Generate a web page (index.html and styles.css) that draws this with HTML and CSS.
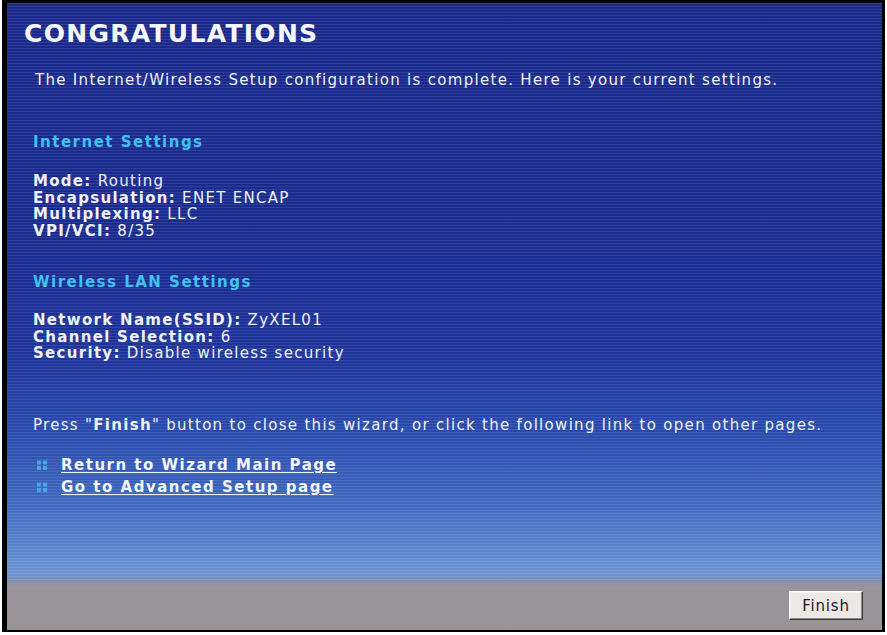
FILE: index.html
```html
<!DOCTYPE html>
<html>
<head>
<meta charset="utf-8">
<link rel="stylesheet" href="styles.css">
</head>
<body>
<div class="frame">
  <div class="main">
    <h1 class="title">CONGRATULATIONS</h1>
    <div class="content">
      <p class="intro">The Internet/Wireless Setup configuration is complete. Here is your current settings.</p>
      <h2 class="section first">Internet Settings</h2>
      <div class="list list-internet">
        <div><b>Mode:</b> Routing</div>
        <div><b>Encapsulation:</b> ENET ENCAP</div>
        <div><b>Multiplexing:</b> LLC</div>
        <div><b>VPI/VCI:</b> 8/35</div>
      </div>
      <h2 class="section second">Wireless LAN Settings</h2>
      <div class="list list-wlan">
        <div><b>Network Name(SSID):</b> ZyXEL01</div>
        <div><b>Channel Selection:</b> 6</div>
        <div><b>Security:</b> Disable wireless security</div>
      </div>
      <p class="press">Press "<b>Finish</b>" button to close this wizard, or click the following link to open other pages.</p>
      <div class="links">
        <a class="link" href="#"><svg class="dots" width="10" height="10" viewBox="0 0 10 10"><rect x="0" y="0.5" width="4" height="4"/><rect x="6" y="0.5" width="4" height="4"/><rect x="0" y="6" width="4" height="4"/><rect x="6" y="6" width="4" height="4"/></svg><span>Return to Wizard Main Page</span></a>
        <a class="link" href="#"><svg class="dots" width="10" height="10" viewBox="0 0 10 10"><rect x="0" y="0.5" width="4" height="4"/><rect x="6" y="0.5" width="4" height="4"/><rect x="0" y="6" width="4" height="4"/><rect x="6" y="6" width="4" height="4"/></svg><span>Go to Advanced Setup page</span></a>
      </div>
    </div>
  </div>
  <div class="footer">
    <button class="finish" type="button">Finish</button>
  </div>
</div>
</body>
</html>
```
FILE: styles.css
```css
html, body {
  margin: 0;
  padding: 0;
  background: #ffffff;
}
body {
  font-family: "DejaVu Sans", Verdana, sans-serif;
  font-size: 15px;
  letter-spacing: 1.3px;
  color: #eef1f8;
}
.frame {
  box-sizing: border-box;
  margin-left: 2px;
  width: 883px;
  height: 632px;
  border-style: solid;
  border-color: #000;
  border-width: 3px 3px 2px 5px;
  display: flex;
  flex-direction: column;
}
.main {
  height: 578px;
  box-sizing: border-box;
  padding-top: 16px;
  background:
    repeating-linear-gradient(to bottom, rgba(255,255,255,0.10) 0 1px, rgba(255,255,255,0) 1px 3px),
    linear-gradient(to bottom, #19288a 0%, #1a2b90 45%, #1e359c 62%, #2a4cae 75%, #3e67bf 86%, #5884cc 94%, #6b93d6 98.5%, #7b8cb0 100%);
}
.title {
  margin: 0 0 0 17px;
  font-size: 25px;
  line-height: 30px;
  font-weight: bold;
  color: #f4f6fb;
  letter-spacing: 1.3px;
}
.content {
  padding-left: 26px;
}
.intro {
  margin: 23px 0 0 2px;
  line-height: 16.6px;
}
.section {
  margin: 0;
  font-size: 15px;
  line-height: 16.6px;
  font-weight: bold;
  color: #3fc2ee;
  letter-spacing: 1.5px;
}
.section.first { margin-top: 45px; }
.section.second { margin-top: 34px; }
.list {
  line-height: 16.6px;
}
.list-internet { margin-top: 23px; }
.list-wlan { margin-top: 22px; }
.press {
  margin: 55px 0 0 0;
  line-height: 16.6px;
}
.links {
  margin-top: 21px;
  display: flex;
  flex-direction: column;
}
.link {
  display: flex;
  align-items: center;
  height: 21.5px;
  color: #f2f5fc;
  font-weight: bold;
  letter-spacing: 1.5px;
  text-decoration: none;
}
.link span {
  text-decoration: underline;
  text-underline-offset: 2px;
}
.dots {
  fill: #4aa6de;
  margin-left: 4px;
  margin-right: 14px;
}
.footer {
  flex: 1;
  background: linear-gradient(to bottom, #8590aa 0px, #98949a 5px, #999597 100%);
  display: flex;
  justify-content: flex-end;
  align-items: flex-start;
  padding: 10px 19px 0 0;
}
.finish {
  width: 74px;
  height: 29px;
  padding: 0;
  font-family: "DejaVu Sans", Verdana, sans-serif;
  font-size: 15px;
  letter-spacing: 0.8px;
  color: #1e1e1e;
  background: #ebe8e5;
  border: 1px solid;
  border-color: #ffffff #3a3a3a #3a3a3a #ffffff;
  box-shadow: inset -1px -1px 0 #8a8888, inset 1px 1px 0 #f6f4f2;
}
```
